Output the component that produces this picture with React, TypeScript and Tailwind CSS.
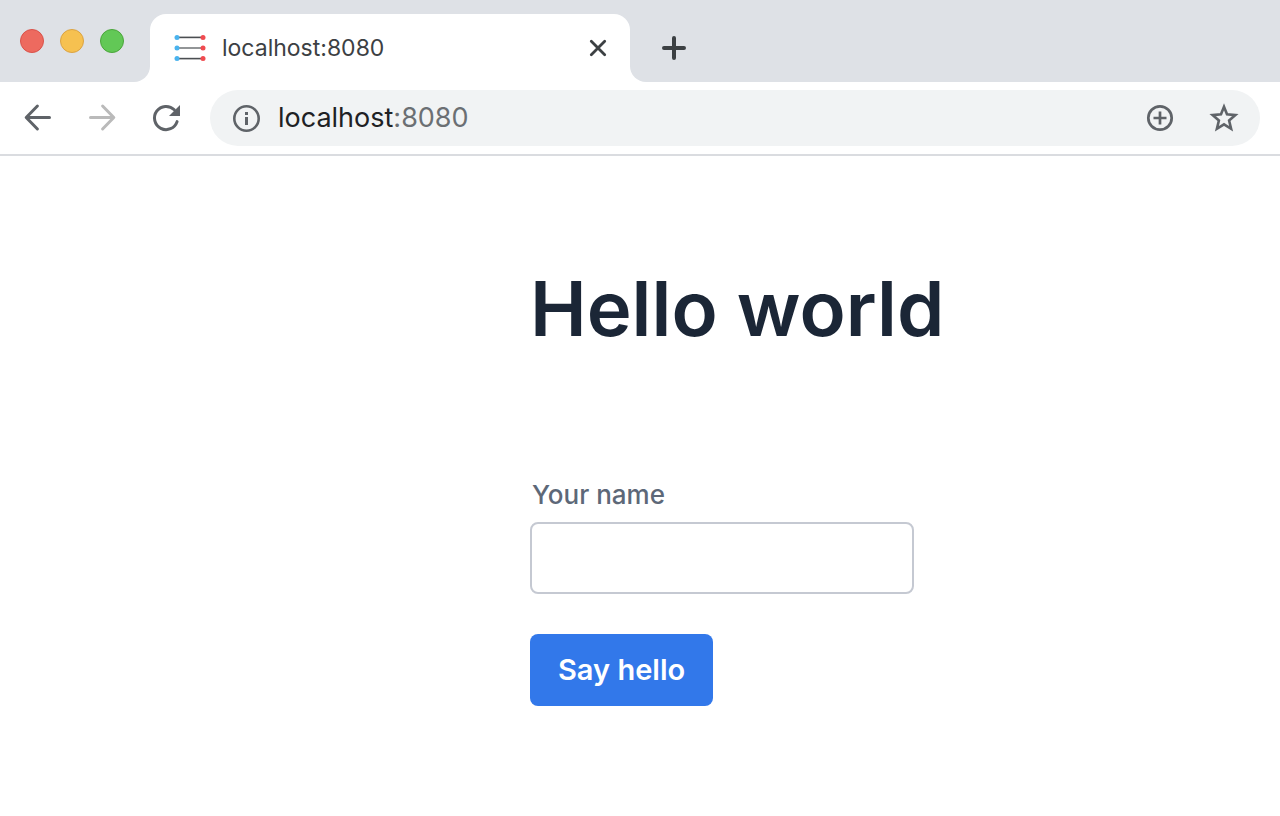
import { useState } from "react";

function Favicon() {
  return (
    <svg className="h-8 w-8 shrink-0" viewBox="0 0 32 32" aria-hidden="true">
      {[5.4, 16, 26.6].map((y, i) => (
        <g key={y}>
          <path d={`M4 ${y}H28`} stroke={i === 1 ? "#777a7d" : "#4b4e52"} strokeWidth="1.6" />
          <circle cx="3" cy={y} r="2.5" fill="#4ab3ee" />
          <circle cx="29" cy={y} r="2.5" fill="#f04b50" />
        </g>
      ))}
    </svg>
  );
}

function TabStrip() {
  return (
    <div className="flex h-[82px] bg-white">
      <div className="flex w-[150px] shrink-0 gap-4 rounded-br-2xl bg-[#dee1e6] pt-[29px] pl-5">
        <button type="button" aria-label="Close window" className="h-6 w-6 rounded-full border border-[#d9524a] bg-[#ed6a5f]" />
        <button type="button" aria-label="Minimise window" className="h-6 w-6 rounded-full border border-[#dba343] bg-[#f6c150]" />
        <button type="button" aria-label="Zoom window" className="h-6 w-6 rounded-full border border-[#4ba53b] bg-[#62c856]" />
      </div>
      <div className="w-[480px] bg-[#dee1e6] pt-[14px]">
        <div className="flex h-full items-center gap-4 rounded-t-2xl bg-white pr-5 pl-6">
          <Favicon />
          <span className="grow text-[23px] leading-8 text-[#3c4043]">localhost:8080</span>
          <button type="button" aria-label="Close tab" className="h-6 w-6">
            <svg viewBox="0 0 24 24" className="h-6 w-6" fill="none" stroke="#3c4043" strokeWidth="2.8" strokeLinecap="round">
              <path d="M5.3 5.3 18.7 18.7M18.7 5.3 5.3 18.7" />
            </svg>
          </button>
        </div>
      </div>
      <div className="grow rounded-bl-2xl bg-[#dee1e6] pt-8 pl-7">
        <button type="button" aria-label="New tab" className="h-8 w-8">
          <svg viewBox="0 0 32 32" className="h-8 w-8" fill="none" stroke="#3c4043" strokeWidth="4" strokeLinecap="round">
            <path d="M6 16H26M16 6V26" />
          </svg>
        </button>
      </div>
    </div>
  );
}

function Toolbar() {
  return (
    <div className="flex h-[74px] items-center border-b-2 border-[#dadce0] bg-white pr-5 pl-[18px]">
      <div className="mr-6 flex shrink-0 items-center gap-6">
        <button type="button" aria-label="Back" className="h-10 w-10">
          <svg viewBox="0 0 40 40" className="h-10 w-10" fill="none" stroke="#5f6368" strokeWidth="3" strokeLinecap="round" strokeLinejoin="round">
            <path d="M31.5 19.5H9M19.4 8 8.2 19.5 19.4 31" />
          </svg>
        </button>
        <button type="button" aria-label="Forward" disabled className="h-10 w-10">
          <svg viewBox="0 0 40 40" className="h-10 w-10" fill="none" stroke="#bababa" strokeWidth="3" strokeLinecap="round" strokeLinejoin="round">
            <path d="M8.5 19.5H31M20.6 8 31.8 19.5 20.6 31" />
          </svg>
        </button>
        <button type="button" aria-label="Reload" className="h-10 w-10">
          <svg viewBox="0 0 40 40" className="h-10 w-10">
            <path d="M31.1 23.6A11.6 11.6 0 1 1 28.3 11.8" fill="none" stroke="#5f6368" strokeWidth="3" strokeLinecap="round" />
            <path d="M34 7V18H23Z" fill="#5f6368" />
          </svg>
        </button>
      </div>
      <div className="flex h-14 grow items-center rounded-full bg-[#f1f3f4] pr-5 pl-5">
        <button type="button" aria-label="View site information" className="mr-4 h-8 w-8 shrink-0">
          <svg viewBox="0 0 32 32" className="h-8 w-8" fill="none" stroke="#5f6368">
            <circle cx="16.5" cy="16.5" r="12.2" strokeWidth="2.6" />
            <path d="M16.5 15V23M16.5 10V13" strokeWidth="3" />
          </svg>
        </button>
        <a href="http://localhost:8080" className="text-[27px] leading-8 text-[#202124]">
          localhost<span className="text-[#6b6f73]">:8080</span>
        </a>
        <div className="ml-auto flex gap-8">
          <button type="button" aria-label="Zoom level" className="h-8 w-8">
            <svg viewBox="0 0 32 32" className="h-8 w-8" fill="none" stroke="#5f6368">
              <circle cx="16" cy="16" r="11.7" strokeWidth="2.7" />
              <path d="M9.5 16H22.5M16 9.5V22.5" strokeWidth="2.7" />
            </svg>
          </button>
          <button type="button" aria-label="Bookmark this page" className="h-8 w-8">
            <svg viewBox="0 0 32 32" className="h-8 w-8" fill="none" stroke="#5f6368" strokeWidth="2.6" strokeMiterlimit="10">
              <path d="M16 4.8 19 12.3 27.4 13.1 21.1 18.5 23.1 26.8 16 22.4 8.9 26.8 10.9 18.5 4.6 13.1 13 12.3Z" />
            </svg>
          </button>
        </div>
      </div>
    </div>
  );
}

export default function App() {
  const [name, setName] = useState("");
  return (
    <div className="min-h-screen bg-white font-['Inter',sans-serif]">
      <header>
        <TabStrip />
        <Toolbar />
      </header>
      <main className="grid grid-cols-[530fr_750fr] pt-[102px]">
        <form className="col-start-2 flex flex-col items-start" onSubmit={(e) => e.preventDefault()}>
          <h1 className="text-[76px] leading-[100px] font-semibold whitespace-nowrap text-[#1b2636]">Hello world</h1>
          <label htmlFor="name" className="mt-[121px] ml-0.5 text-[26px] leading-8 font-medium text-[#5d6878]">
            Your name
          </label>
          <input
            id="name"
            type="text"
            value={name}
            onChange={(e) => setName(e.target.value)}
            className="mt-[11px] h-[72px] w-96 rounded-lg border-2 border-[#c5c9d2] px-4 text-[28px] text-[#1b2636] outline-none focus:border-[#3278ea]"
          />
          <button type="submit" className="mt-10 h-[72px] rounded-lg bg-[#3278ea] px-7 text-[29px] leading-10 font-semibold text-white">
            Say hello
          </button>
        </form>
      </main>
    </div>
  );
}
